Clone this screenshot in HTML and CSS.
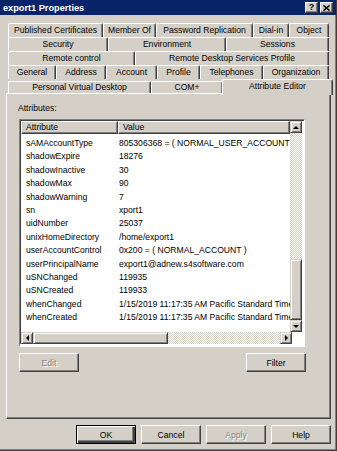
FILE: index.html
```html
<!DOCTYPE html>
<html lang="en">
<head>
  <meta charset="UTF-8">
  <title>export1 Properties</title>
  <link rel="stylesheet" href="styles.css">
</head>
<body>
  <div class="window">
    <div class="titlebar">
      <span class="title">export1 Properties</span>
      <div class="caption-buttons">
        <span class="cap-btn">?</span>
        <span class="cap-btn">
          <svg width="7" height="6" viewBox="0 0 7 6"><path d="M0.5 0.5 L6.5 5.5 M6.5 0.5 L0.5 5.5" stroke="#000" stroke-width="1.6"/></svg>
        </span>
      </div>
    </div>

    <div class="tabs">
      <div class="tab-row row1">
        <div class="tab">Published Certificates</div>
        <div class="tab">Member Of</div>
        <div class="tab">Password Replication</div>
        <div class="tab">Dial-in</div>
        <div class="tab">Object</div>
      </div>
      <div class="tab-row row2">
        <div class="tab">Security</div>
        <div class="tab">Environment</div>
        <div class="tab">Sessions</div>
      </div>
      <div class="tab-row row3">
        <div class="tab">Remote control</div>
        <div class="tab">Remote Desktop Services Profile</div>
      </div>
      <div class="tab-row row4">
        <div class="tab">General</div>
        <div class="tab">Address</div>
        <div class="tab">Account</div>
        <div class="tab">Profile</div>
        <div class="tab">Telephones</div>
        <div class="tab">Organization</div>
      </div>
      <div class="tab-row row5">
        <div class="tab">Personal Virtual Desktop</div>
        <div class="tab">COM+</div>
        <div class="tab selected">Attribute Editor</div>
      </div>
    </div>

    <div class="panel">
      <div class="label">Attributes:</div>
      <div class="listbox">
        <div class="list-main">
          <div class="list-view">
            <div class="list-header">
              <div class="col-attr">Attribute</div>
              <div class="col-val">Value</div>
            </div>
            <div class="list-rows">
              <div class="row"><span class="c-attr">sAMAccountType</span><span class="c-val">805306368 = ( NORMAL_USER_ACCOUNT )</span></div>
              <div class="row"><span class="c-attr">shadowExpire</span><span class="c-val">18276</span></div>
              <div class="row"><span class="c-attr">shadowInactive</span><span class="c-val">30</span></div>
              <div class="row"><span class="c-attr">shadowMax</span><span class="c-val">90</span></div>
              <div class="row"><span class="c-attr">shadowWarning</span><span class="c-val">7</span></div>
              <div class="row"><span class="c-attr">sn</span><span class="c-val">xport1</span></div>
              <div class="row"><span class="c-attr">uidNumber</span><span class="c-val">25037</span></div>
              <div class="row"><span class="c-attr">unixHomeDirectory</span><span class="c-val">/home/export1</span></div>
              <div class="row"><span class="c-attr">userAccountControl</span><span class="c-val">0x200 = ( NORMAL_ACCOUNT )</span></div>
              <div class="row"><span class="c-attr">userPrincipalName</span><span class="c-val">export1@adnew.s4software.com</span></div>
              <div class="row"><span class="c-attr">uSNChanged</span><span class="c-val">119935</span></div>
              <div class="row"><span class="c-attr">uSNCreated</span><span class="c-val">119933</span></div>
              <div class="row"><span class="c-attr">whenChanged</span><span class="c-val">1/15/2019 11:17:35 AM Pacific Standard Time</span></div>
              <div class="row"><span class="c-attr">whenCreated</span><span class="c-val">1/15/2019 11:17:35 AM Pacific Standard Time</span></div>
            </div>
          </div>
          <div class="vscroll">
            <div class="sb-btn"><span class="arrow up"></span></div>
            <div class="sb-track"></div>
            <div class="sb-thumb v"></div>
            <div class="sb-btn"><span class="arrow down"></span></div>
          </div>
        </div>
        <div class="hscroll">
          <div class="sb-btn"><span class="arrow left"></span></div>
          <div class="sb-thumb h"></div>
          <div class="sb-track"></div>
          <div class="sb-btn"><span class="arrow right"></span></div>
          <div class="sb-corner"></div>
        </div>
      </div>
      <div class="panel-buttons">
        <button class="btn" disabled>Edit</button>
        <button class="btn">Filter</button>
      </div>
    </div>

    <div class="dialog-buttons">
      <button class="btn default">OK</button>
      <button class="btn">Cancel</button>
      <button class="btn" disabled>Apply</button>
      <button class="btn">Help</button>
    </div>
  </div>
</body>
</html>
```

FILE: styles.css
```css
* {
  box-sizing: border-box;
}

body {
  margin: 0;
  background: #d4d0c8;
  font-family: "Liberation Sans", Arial, sans-serif;
  font-size: 8.6px;
  color: #000;
}

.window {
  width: 337px;
  height: 451px;
  overflow: hidden;
  border-right: 1px solid #404040;
  border-bottom: 1px solid #404040;
  box-shadow: inset -1px -1px #808080;
}

/* title bar */
.titlebar {
  height: 15px;
  background: #0a246a;
  display: flex;
  align-items: center;
  justify-content: space-between;
  padding: 0 3px 0 3px;
}

.title {
  color: #fff;
  font-weight: bold;
  font-size: 9.2px;
}

.caption-buttons {
  display: flex;
  gap: 2px;
}

.cap-btn {
  width: 13px;
  height: 11px;
  background: #d4d0c8;
  border: 1px solid;
  border-color: #fff #404040 #404040 #fff;
  box-shadow: inset -1px -1px #808080;
  display: flex;
  align-items: center;
  justify-content: center;
  font-weight: bold;
  font-size: 9px;
  line-height: 1;
}

/* tabs */
.tabs {
  margin-top: 8px;
  padding-left: 8px;
}

.tab-row {
  display: grid;
  height: 14px;
}

.row1 { grid-template-columns: 95px 53px 97px 36px 40px; }
.row2 { grid-template-columns: 100px 118px 103px; }
.row3 { grid-template-columns: 127px 194px; }
.row4 { grid-template-columns: 48px 50px 51px 43px 63px 66px; }
.row5 { grid-template-columns: 143px 72px 110px; }

.tab {
  height: 14px;
  background: #d4d0c8;
  border-top: 1px solid #fff;
  border-left: 1px solid #fff;
  border-right: 1px solid #404040;
  box-shadow: inset -1px 0 #808080;
  border-radius: 2px 2px 0 0;
  text-align: center;
  line-height: 13px;
  white-space: nowrap;
}

.row5 .tab {
  margin-top: 2px;
  height: 12px;
  line-height: 11px;
}

.row5 .tab.selected {
  margin-top: 0;
  margin-left: -1px;
  height: 16px;
  line-height: 12px;
  position: relative;
  z-index: 1;
}

/* panel */
.panel {
  margin-left: 6px;
  width: 325px;
  height: 326px;
  border-top: 1px solid #fff;
  border-left: 1px solid #fff;
  border-right: 1px solid #404040;
  border-bottom: 1px solid #404040;
  box-shadow: inset -1px -1px #808080;
  padding: 9px 0 0 11px;
}

.label {
  height: 16px;
  line-height: 10px;
}

.listbox {
  margin-left: 1px;
  width: 286px;
  height: 228px;
  border: 1px solid;
  border-color: #808080 #fff #fff #808080;
  background: #fff;
  display: flex;
  flex-direction: column;
}

.list-main {
  display: flex;
  height: 212px;
  border-top: 1px solid #404040;
  border-left: 1px solid #404040;
}

.list-view {
  width: 269px;
  overflow: hidden;
}

.list-header {
  display: flex;
  height: 13px;
}

.list-header div {
  background: #d4d0c8;
  border-top: 1px solid #fff;
  border-left: 1px solid #fff;
  border-right: 1px solid #404040;
  border-bottom: 1px solid #404040;
  box-shadow: inset -1px -1px #808080;
  line-height: 11px;
  padding-left: 4px;
  white-space: nowrap;
}

.col-attr {
  width: 97px;
  flex: none;
}

.col-val {
  flex: 1;
}

.list-rows {
  padding-top: 3px;
}

.row {
  display: flex;
  height: 13.4px;
  line-height: 13.4px;
  white-space: nowrap;
}

.c-attr {
  width: 97px;
  flex: none;
  padding-left: 5px;
}

.c-val {
  padding-left: 1px;
}

/* scrollbars */
.vscroll {
  width: 12px;
  display: flex;
  flex-direction: column;
}

.hscroll {
  height: 12px;
  display: flex;
  border-left: 1px solid #404040;
}

.sb-btn {
  width: 12px;
  height: 12px;
  flex: none;
  background: #d4d0c8;
  border: 1px solid;
  border-color: #d4d0c8 #404040 #404040 #d4d0c8;
  box-shadow: inset 1px 1px #fff, inset -1px -1px #808080;
  display: flex;
  align-items: center;
  justify-content: center;
}

.sb-track {
  flex: 1;
  background: repeating-conic-gradient(#fff 0 25%, #d4d0c8 0 50%) 0 0 / 2px 2px;
}

.sb-thumb {
  flex: none;
  background: #d4d0c8;
  border: 1px solid;
  border-color: #d4d0c8 #404040 #404040 #d4d0c8;
  box-shadow: inset 1px 1px #fff, inset -1px -1px #808080;
}

.sb-thumb.v {
  height: 61px;
}

.sb-thumb.h {
  width: 135px;
}

.sb-corner {
  width: 12px;
  flex: none;
  background: #fff;
}

.arrow {
  width: 0;
  height: 0;
  border: 3px solid transparent;
}

.arrow.up { border-bottom-color: #000; border-top-width: 0; }
.arrow.down { border-top-color: #000; border-bottom-width: 0; }
.arrow.left { border-right-color: #000; border-left-width: 0; }
.arrow.right { border-left-color: #000; border-right-width: 0; }

/* buttons */
.btn {
  width: 60px;
  height: 19px;
  padding: 0;
  background: #d4d0c8;
  border: 1px solid;
  border-color: #fff #404040 #404040 #fff;
  box-shadow: inset -1px -1px #808080;
  font-family: inherit;
  font-size: 8.6px;
  color: #000;
}

.btn:disabled {
  color: #808080;
  text-shadow: 1px 1px #fff;
}

.btn.default {
  border: 1px solid #000;
  box-shadow: inset 1px 1px #fff, inset -2px -2px #404040, inset -2px -2px 0 1px #808080;
}

.panel-buttons {
  display: flex;
  justify-content: space-between;
  width: 287px;
  margin-top: 6px;
  margin-left: 1px;
}

.dialog-buttons {
  display: flex;
  justify-content: flex-end;
  gap: 5px;
  padding: 6px 5px 0 0;
}
```
